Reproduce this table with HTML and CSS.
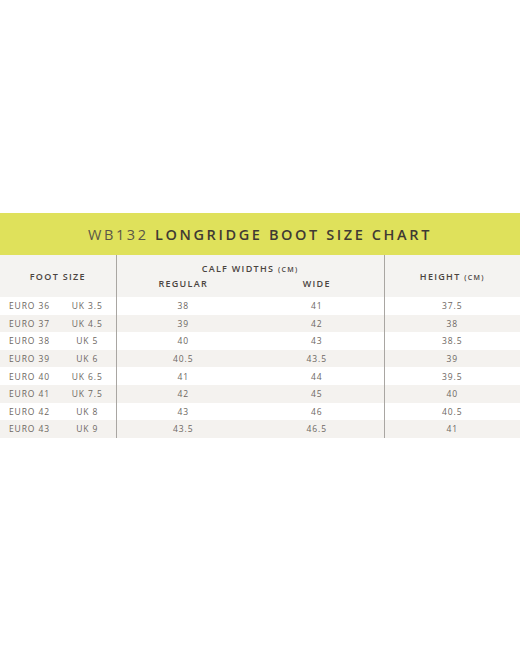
FILE: index.html
```html
<!DOCTYPE html>
<html lang="en">
<head>
  <meta charset="UTF-8">
  <title>WB132 Longridge Boot Size Chart</title>
  <link rel="stylesheet" href="styles.css">
</head>
<body>
  <div class="chart">
    <h2 class="banner"><span class="code">WB132</span> LONGRIDGE BOOT SIZE CHART</h2>
    <table>
      <colgroup>
        <col class="c-euro">
        <col class="c-uk">
        <col class="c-calf">
        <col class="c-calf">
        <col>
      </colgroup>
      <thead>
        <tr>
          <th colspan="2" rowspan="2" class="sep">FOOT SIZE</th>
          <th colspan="2" class="sep top">CALF WIDTHS <small>(CM)</small></th>
          <th rowspan="2">HEIGHT <small>(CM)</small></th>
        </tr>
        <tr>
          <th class="sub">REGULAR</th>
          <th class="sub sep">WIDE</th>
        </tr>
      </thead>
      <tbody>
        <tr><td>EURO 36</td><td class="sep">UK 3.5</td><td>38</td><td class="sep">41</td><td>37.5</td></tr>
        <tr><td>EURO 37</td><td class="sep">UK 4.5</td><td>39</td><td class="sep">42</td><td>38</td></tr>
        <tr><td>EURO 38</td><td class="sep">UK 5</td><td>40</td><td class="sep">43</td><td>38.5</td></tr>
        <tr><td>EURO 39</td><td class="sep">UK 6</td><td>40.5</td><td class="sep">43.5</td><td>39</td></tr>
        <tr><td>EURO 40</td><td class="sep">UK 6.5</td><td>41</td><td class="sep">44</td><td>39.5</td></tr>
        <tr><td>EURO 41</td><td class="sep">UK 7.5</td><td>42</td><td class="sep">45</td><td>40</td></tr>
        <tr><td>EURO 42</td><td class="sep">UK 8</td><td>43</td><td class="sep">46</td><td>40.5</td></tr>
        <tr><td>EURO 43</td><td class="sep">UK 9</td><td>43.5</td><td class="sep">46.5</td><td>41</td></tr>
      </tbody>
    </table>
  </div>
</body>
</html>
```

FILE: styles.css
```css
body {
  margin: 0;
  background: white;
  font-family: "Open Sans", sans-serif;
  color: #5f5955;
}

.chart {
  margin-top: 213px;
}

.banner {
  margin: 0;
  height: 42px;
  line-height: 44px;
  background: #dfe15b;
  text-align: center;
  font-size: 14.5px;
  font-weight: 600;
  letter-spacing: 2.6px;
  color: #3f3a33;
}

.banner .code {
  font-weight: 400;
  color: #5a5648;
}

table {
  width: 100%;
  border-collapse: collapse;
  table-layout: fixed;
}

.c-euro { width: 59px; }
.c-uk { width: 57px; }
.c-calf { width: 134px; }

th {
  background: #f4f3f1;
  font-size: 9px;
  font-weight: 600;
  letter-spacing: 1.3px;
  color: #4a443f;
  height: 20px;
  padding: 0;
}

th small {
  font-size: 7px;
}

th.top {
  vertical-align: bottom;
}

th.sub {
  vertical-align: top;
  padding-top: 2px;
}

td {
  height: 17.6px;
  padding: 0;
  text-align: center;
  font-size: 8.5px;
  letter-spacing: 0.9px;
  color: #6d6762;
}

tbody tr:nth-child(even) td {
  background: #f4f2ef;
}

.sep {
  border-right: 1px solid #a9a6a2;
}
```
